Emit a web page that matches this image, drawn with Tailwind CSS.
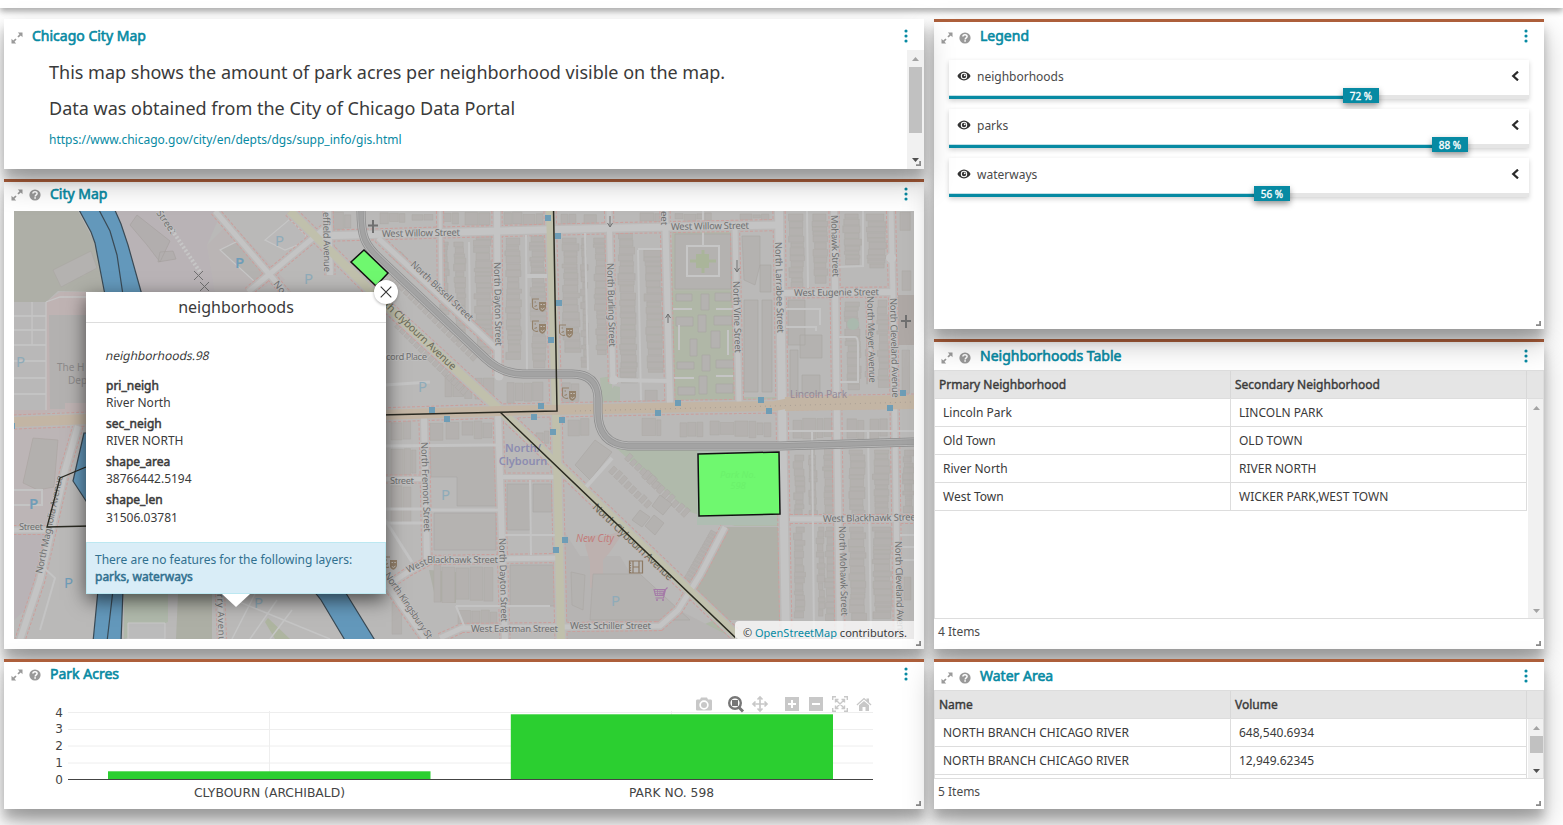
<!DOCTYPE html>
<html lang="en">
<head>
<meta charset="utf-8">
<title>Chicago dashboard</title>
<script src="https://cdn.jsdelivr.net/npm/@tailwindcss/browser@4"></script>
</head>
<body class="bg-white text-[#3a3a3a] text-[12px] font-['Noto_Sans',sans-serif] overflow-hidden w-[1563px] h-[825px]">
<svg width="0" height="0" class="absolute">
  <symbol id="expand" viewBox="0 0 12 12"><path d="M6.800 .5H11.500V5.200L9.800 3.500 7.600 5.600 6.400 4.400 8.500 2.200zM.5 6.800V11.500H5.200L3.500 9.800 5.600 7.600 4.400 6.400 2.200 8.500z" fill="#9a9a9a"/></symbol>
  <symbol id="help" viewBox="0 0 12 12"><circle cx="6" cy="6" r="5.600" fill="#999"/><path d="M3.900 4.600C3.900 2.200 8.100 2.200 8.100 4.600 8.100 5.900 6.200 5.900 6.200 7.400" fill="none" stroke="#fff" stroke-width="1.500"/><rect x="5.300" y="8.200" width="1.600" height="1.500" fill="#fff"/></symbol>
  <symbol id="dots" viewBox="0 0 4 14"><g fill="#078aa3"><circle cx="2" cy="2" r="1.550"/><circle cx="2" cy="7" r="1.550"/><circle cx="2" cy="12" r="1.550"/></g></symbol>
  <symbol id="grip" viewBox="0 0 5 5"><path d="M3.200 0H5V5H0V3.200H3.200z" fill="#8a8a8a"/></symbol>
  <symbol id="up" viewBox="0 0 7 4"><path d="M0 4 3.500 0 7 4z"/></symbol>
  <symbol id="down" viewBox="0 0 7 4"><path d="M0 0 3.500 4 7 0z"/></symbol>
  <symbol id="eye" viewBox="0 0 14 10"><path fill-rule="evenodd" d="M7 .5C10 .5 12.500 2.700 13.600 5 12.500 7.300 10 9.500 7 9.500S1.500 7.300 .4 5C1.500 2.700 4 .5 7 .5zM7 1.800A3.200 3.200 0 1 0 7 8.200A3.200 3.200 0 1 0 7 1.800z" fill="#333"/><circle cx="7" cy="5" r="2.200" fill="#333"/><circle cx="7.700" cy="4.300" r=".9" fill="#fff"/></symbol>
  <symbol id="chev" viewBox="0 0 8 10"><path d="M7 .6 2.200 5 7 9.400" fill="none" stroke="#2b2b2b" stroke-width="2.200"/></symbol>
</svg>

<header class="relative h-2 bg-white shadow-[0_3px_6px_rgba(0,0,0,0.16),0_3px_6px_rgba(0,0,0,0.23)]"></header>

<main class="flex gap-2.5 pl-1 pt-[11px]">
  <!-- left column -->
  <div class="flex flex-col gap-2.5 w-[920px]">
    <section class="relative z-40 h-[150px] bg-white flex flex-col shadow-[0_14px_28px_rgba(0,0,0,0.25),0_10px_10px_rgba(0,0,0,0.22)]">
      <div class="h-[31px] pt-[3px] flex items-center pl-[7px] pr-4">
        <svg class="w-3 h-3 mt-1 mr-[9px]"><use href="#expand"/></svg>
        <h2 class="text-[14px] text-[#078aa3] [-webkit-text-stroke:0.6px] grow -mt-0.5">Chicago City Map</h2>
        <svg class="w-1 h-[14px]"><use href="#dots"/></svg>
      </div>
      <div class="flex grow">
        <div class="grow pl-[45px]">
          <p class="text-[18px] leading-[26px] mt-[9px]">This map shows the amount of park acres per neighborhood visible on the map.</p>
          <p class="text-[18px] leading-[26px] mt-[10px]">Data was obtained from the City of Chicago Data Portal</p>
          <p class="text-[12px] leading-[18px] mt-[10px] text-[#078aa3]">https://www.chicago.gov/city/en/depts/dgs/supp_info/gis.html</p>
        </div>
        <div class="w-[17px] bg-[#f1f1f1] flex flex-col items-center pt-[7px]">
          <svg class="w-[7px] h-1 mb-[6px]" fill="#a3a3a3"><use href="#up"/></svg>
          <div class="w-[13px] h-[66px] bg-[#c1c1c1]"></div>
          <svg class="w-[7px] h-1 mt-[25px]" fill="#505050"><use href="#down"/></svg>
        </div>
      </div>
      <svg class="absolute right-[3px] bottom-[3px] w-[5px] h-[5px]"><use href="#grip"/></svg>
    </section>

    <section class="relative z-10 h-[470px] bg-white border-t-[3px] border-[#ad5f3b] shadow-[0_14px_28px_rgba(0,0,0,0.25),0_10px_10px_rgba(0,0,0,0.22)]">
      <div class="h-[25px] flex items-center pl-[7px] pr-4">
        <svg class="w-3 h-3 mt-px mr-[6px]"><use href="#expand"/></svg>
        <svg class="w-3 h-3 mt-px mr-[9px]"><use href="#help"/></svg>
        <h2 class="text-[14px] text-[#078aa3] [-webkit-text-stroke:0.6px] grow -mt-0.5">City Map</h2>
        <svg class="w-1 h-[14px] -mt-px"><use href="#dots"/></svg>
      </div>
      <div class="relative mt-1 ml-[10px] w-[900px] h-[428px] overflow-hidden">
        <svg id="map" class="block w-[900px] h-[428px] font-['Noto_Sans',sans-serif]" viewBox="14 211 900 428">
          <rect x="14" y="211" width="900" height="428" fill="#bab9b8"/>
          <path d="M14 211H78L95 243 105 292 58 291 46 302H14z" fill="#aeafa7"/>
          <path d="M53 270 91 251 97 268 61 287z" fill="#b4b2b0" stroke="#a9a6a3" stroke-width=".6"/>
          <path d="M115 211H222L207 245 215 292H141L122 225z" fill="#b9b3b6"/>
          <path d="M14 302H46L60 292H90V413L52 412 14 418z" fill="#bfb3b3"/>
          <path d="M14 302H46V410H14z" fill="#b9b8b8"/>
          <path d="M49 315H90V403H65V409H50z" fill="#b3b1b0"/>
          <g stroke="#c6c6c6" stroke-width="1.300" fill="none"><path d="M14 316H46M14 330H46M14 345H46M14 361H46M14 378H46M14 394H46M32 302V345M46 302V410M46 302 60 297H90"/></g>
          <path d="M14 427H80L48 527 14 529z" fill="#bcb5b6"/>
          <path d="M33 438 58 440 54 487 38 490 23 483z" fill="#b3b0ae" stroke="#a9a29f" stroke-width=".6"/>
          <path d="M14 530H50L36 600 14 620z" fill="#b9b3b6"/>
          <path d="M124 594H168V622L124 639z" fill="#afb8aa"/>
          <path d="M178 594H212V639H176z" fill="#adafa5"/>
          <path d="M268 618 290 639H275L265 622z" fill="#aeb5a0"/>
          <path d="M128 623H165V639H128z" fill="#bbb" stroke="#c8c8c8"/>
          <path d="M220 594 330 639M232 639 255 594M250 639 277 600M270 639 292 610" stroke="#c5c5c5" stroke-width="1.500"/>
          <path d="M614 446H698V524H783V518L783 526H735L690 512 640 470z" fill="#b0baab"/>
          <path d="M697 450H781V525H697z" fill="#afbdb2"/>
          <path d="M727 527H778L782 620H720L695 591z" fill="#afb0a8"/>
          <path d="M672 232H733V291H672z" fill="#b3b7ab"/>
          <path d="M672 291H735V400H672z" fill="#b0b7a7"/>
          <path d="M600 378 612 376V390L608 404H602z" fill="#b0baab"/>
          <path d="M743 397H778V404H743zM614 386 620 387V402H602z" fill="#b0b9ac"/>
          <path d="M898 295H914V345H898z" fill="#aea8a5"/>
          <path d="M702 625V639H735L715 620z" fill="#aeb7a6"/>
          <path d="M560 525 580 556 620 556 640 590 735 639H560z" fill="#b6b4b3"/>
          <path d="M585 545Q590 530 602 537L625 530 610 552 603 560V588H590V562z" fill="#bdb1af"/>
          <path d="M429 570 456 572V603L436 601z" fill="#aeafa7"/>
          <path d="M430 446H498V506H457V477H431z" fill="#b4b2b0" stroke="#aaa6a4" stroke-width=".6"/>
          <path d="M434 513H496V550H434z" fill="#b5b3b1" stroke="#aaa6a4" stroke-width=".6"/>
          <path d="M510 565H555V606H510z" fill="#b4b2b0" stroke="#aaa6a4" stroke-width=".6"/>
          <path d="M507 484H530V530H507zM533 484H552V512H533z" fill="#b4b2b0" stroke="#aaa6a4" stroke-width=".6"/>
          <path d="M230 222 285 280 250 292H215L207 245z" fill="#bab5b5"/>
          <path d="M240 240 270 270 255 282 220 250z" fill="#b4b2b0" stroke="#c6c6c6" stroke-width="1.200"/>
          <path d="M290 219 310 240 285 250 265 240z" fill="#bab9b9" stroke="#c6c6c6" stroke-width="1.200"/>
          <path d="M130 225 137 215 170 241 160 262 147 245z M160 252 173 251 176 259 158 262z" fill="#b2aeae" stroke="#a59f9e" stroke-width=".6"/>
          <g id="houses" fill="#b4b1af" stroke="#aca8a5" stroke-width=".5"></g>
          <g fill="#b4b2b0" stroke="#a9a6a3" stroke-width=".6">
            <path d="M675 234H731V289H675z"/>
            <path d="M676 294H692V301H676zM701 294H709V310H701zM715 293H731V301H715zM676 317H693V326H676zM698 315H706V332H698zM714 316H732V325H714zM690 339H697V356H690zM711 331H720V348H711zM677 362H694V369H677zM702 355H710V371H702zM716 360H734V368H716zM678 387H695V395H678zM699 376H707V394H699zM716 384H733V393H716z"/>
            <path d="M788 300H805V345H788zM800 335H822V358H800zM790 350H798V398H790zM802 375H820V394H802zM742 236H760V265L755 285 744 280zM760 265H771V292H760zM744 300H758V392H744zM762 300H772V392H762z"/>
            <path d="M640 510 650 517 642 527 632 520zM654 515 664 523 655 535 645 526zM595 440 612 452 590 480 575 465zM660 495 672 504 663 515 652 506z"/>
            <path d="M593 574H640L690 620H590zM571 572 585 575 583 610 572 605z"/>
          </g>
          <path d="M687 246H719V276H687z" fill="#b4b2b0" stroke="#c6c6c6" stroke-width="2"/>
          <path d="M696 254H709V268H696z" fill="#aab59a"/><path d="M690 261H716M703 250V273" stroke="#aab59a" stroke-width="3"/>
          <path d="M703 211V246M673 309H692M716 309H733M679 325V350M728 330V355M674 378H694M716 376H733" stroke="#c5c5c5" stroke-width="2" fill="none"/>
          <circle cx="853" cy="324" r="6" fill="#aab9ae"/>
          <g id="roads" fill="none"></g>
          <!-- elevated railway -->
          <g fill="none">
            <path d="M361 211C361 236 364 245 382 261L485 358Q502 374 523 374H572Q597 374 598 398V412Q598 444 628 446H780L914 442" stroke="#8c8c8c" stroke-width="9"/>
            <path d="M361 211C361 236 364 245 382 261L485 358Q502 374 523 374H572Q597 374 598 398V412Q598 444 628 446H780L914 442" stroke="#b6b6b6" stroke-width="7.600"/>
            <path d="M361 211C361 236 364 245 382 261L485 358Q502 374 523 374H572Q597 374 598 398V412Q598 444 628 446H780L914 442" stroke="#979797" stroke-width="5.400"/>
            <path d="M361 211C361 236 364 245 382 261L485 358Q502 374 523 374H572Q597 374 598 398V412Q598 444 628 446H780L914 442" stroke="#a3a3a3" stroke-width="4"/>
          </g>
          <!-- street labels -->
          <g fill="#707070" font-size="9.500" stroke="#c2c2c2" stroke-width="1.300" paint-order="stroke">
            <text x="382" y="237" textLength="78" transform="rotate(-1 382 237)">West Willow Street</text>
            <text x="671" y="230" textLength="78" transform="rotate(-1 671 230)">West Willow Street</text>
            <text x="794" y="296" textLength="85" transform="rotate(-.5 794 296)">West Eugenie Street</text>
            <text x="823" y="522" textLength="96" transform="rotate(-1 823 522)">West Blackhawk Street</text>
            <text x="427" y="563" textLength="71">Blackhawk Street</text>
            <text x="408" y="573" transform="rotate(-24 408 573)">West</text>
            <text x="471" y="632" textLength="87">West Eastman Street</text>
            <text x="570" y="629" textLength="81">West Schiller Street</text>
            <text x="386" y="360" textLength="41">cord Place</text>
            <text x="390" y="484" textLength="24">Street</text>
            <text x="19" y="530" textLength="24">Street</text>
            <text x="323" y="212" textLength="60" transform="rotate(89 323 212)">effield Avenue</text>
            <text x="494" y="262" textLength="84" transform="rotate(89 494 262)">North Dayton Street</text>
            <text x="607" y="263" textLength="84" transform="rotate(88.500 607 263)">North Burling Street</text>
            <text x="661" y="211" transform="rotate(90 661 211)">eet</text>
            <text x="733" y="281" textLength="72" transform="rotate(88.500 733 281)">North Vine Street</text>
            <text x="775" y="242" textLength="91" transform="rotate(88.500 775 242)">North Larrabee Street</text>
            <text x="831" y="215" textLength="62" transform="rotate(88.500 831 215)">Mohawk Street</text>
            <text x="867" y="296" textLength="87" transform="rotate(88.500 867 296)">North Meyer Avenue</text>
            <text x="890" y="298" textLength="100" transform="rotate(88.700 890 298)">North Cleveland Avenue</text>
            <text x="839" y="526" textLength="90" transform="rotate(88.500 839 526)">North Mohawk Street</text>
            <text x="895" y="541" textLength="100" transform="rotate(88.500 895 541)">North Cleveland Avenue</text>
            <text x="421" y="442" textLength="90" transform="rotate(88 421 442)">North Fremont Street</text>
            <text x="499" y="538" textLength="84" transform="rotate(88.500 499 538)">North Dayton Street</text>
            <text x="410" y="265" textLength="82" transform="rotate(43.500 410 265)">North Bissell Street</text>
            <text x="384" y="306" textLength="94" font-size="10.500" fill="#6b6a58" stroke="none" transform="rotate(43.500 384 306)">th Clybourn Avenue</text>
            <text x="592" y="508" textLength="106" font-size="10.500" fill="#6b6a58" stroke="none" transform="rotate(43.500 592 508)">North Clybourn Avenue</text>
            <text x="384" y="575" textLength="78" transform="rotate(56 384 575)">North Kingsbury St</text>
            <text x="156" y="213" transform="rotate(55 156 213)">Street</text>
            <text x="273" y="284" transform="rotate(52 273 284)">Nor</text>
            <text x="42" y="574" textLength="100" transform="rotate(-78 42 574)">North Magnolia Avenue</text>
            <text x="217" y="594" textLength="54" transform="rotate(88 217 594)">rry Avenue</text>
          </g>
          <g fill="#8d8b8b" font-size="10"><text x="57" y="371">The H</text><text x="68" y="384">Dep</text></g>
          <text x="790" y="398" font-size="10" fill="#948a98" textLength="57">Lincoln Park</text>
          <g fill="#8c8cb0" font-size="11" font-weight="600" text-anchor="middle"><text x="523" y="452">North/</text><text x="523" y="465">Clybourn</text></g>
          <text x="576" y="542" font-size="10" font-style="italic" fill="#c27e7c" textLength="38">New City</text>
          <g fill="#6f9db8" font-size="15"><text x="235" y="268" font-weight="600">P</text><g fill="#8fabb9"><text x="275" y="246">P</text><text x="304" y="284">P</text><text x="16" y="367">P</text><text x="418" y="392">P</text><text x="441" y="500">P</text><text x="611" y="606">P</text><text x="254" y="608">P</text></g><text x="29" y="509" font-weight="600">P</text><text x="64" y="588">P</text></g>
          <!-- crosses, gates, arrows -->
          <g stroke="#707070" fill="none"><path d="M373 220V233M368 225.500H378M906 315V328M901 321H911" stroke-width="2"/><path d="M194 271 203 280M203 271 194 280M200 282 209 291M209 282 200 291" stroke-width="1"/><path d="M610 216V226M607.500 223 610 227 612.500 223M737 260V271M734.500 268 737 272 739.500 268M668 314V323M665.500 318 668 314 670.500 318"/></g>
          <path d="M172 230 200 272" stroke="#c6c6c6" stroke-width="4" stroke-dasharray="2 2"/>
          <g id="stops" fill="#6e9db6"></g>
          <!-- theatre masks, cinema, shop -->
          <g id="masks"></g>
          <g fill="none" stroke="#8d7a64" stroke-width="1.200"><path d="M629.500 561V573H642.500V561zM633 561V573M639 561V573M633 567H639"/><path d="M630.500 562.500V573" stroke-dasharray="1.200 1.200"/></g>
          <g fill="none" stroke="#a57aa8"><path d="M654 589.500H664.500L663 595.500H655.500zM667.500 587.500 665.500 589.500 663.500 598H655.500" stroke-width="1.100"/><path d="M655 591.500H664M655 593.500H663.500M657.500 589.500V595M660 589.500V595M662 589.500V595" stroke-width=".7"/></g><circle cx="657" cy="600" r="1" fill="#a57aa8"/><circle cx="663" cy="600" r="1" fill="#a57aa8"/>
          <!-- waterways layer -->
          <g fill="#6398bb" stroke="#3a4a55" stroke-width="1.200"><path d="M78 208 91 232 95 243 105 295H142L128 245 121 224 114 208zM84 433 73 481 88 504V433zM98 590 93 642H121L123 590zM313 590 321 600 346 642H376L344 590z"/><path d="M98 208 110 231 117 255 123 295M113 590 107 642" fill="none"/></g>
          <!-- neighborhoods layer -->
          <g fill="none" stroke="#2a2a22"><path d="M86 467 60 478 47 527 90 526" stroke-width="1.300"/><path d="M553.500 208 557 411 380 415M500 412 740 642" stroke-width="1.500"/></g>
          <!-- parks layer -->
          <g fill="#6ff86f" stroke="#111" stroke-width="1.500"><path d="M364 250 388 273 376 286 351 262zM698 454 779 452 780 514 699 516z"/></g>
          <g fill="#6bf16b" font-size="9.500" font-style="italic" text-anchor="middle"><text x="738" y="478">Park No.</text><text x="738" y="489">598</text></g>
        </svg>

        <!-- feature popup -->
        <div class="absolute left-[72px] top-[81px] w-[300px] h-[302px] bg-white shadow-[0_6px_18px_rgba(0,0,0,0.6)] flex flex-col">
          <div class="h-[31px] border-b border-[#ddd] text-center text-[16px] leading-[30px]">neighborhoods</div>
          <div class="pl-[20px] grow leading-[17px]">
            <p class="mt-[24px] mb-[13px]"><span class="inline-block -skew-x-12">neighborhoods.98</span></p>
            <p class="[-webkit-text-stroke:0.5px]">pri_neigh</p><p class="mb-1">River North</p>
            <p class="[-webkit-text-stroke:0.5px]">sec_neigh</p><p class="mb-1">RIVER NORTH</p>
            <p class="[-webkit-text-stroke:0.5px]">shape_area</p><p class="mb-1">38766442.5194</p>
            <p class="[-webkit-text-stroke:0.5px]">shape_len</p><p class="mt-px">31506.03781</p>
          </div>
          <div class="h-[52px] bg-[#d9edf7] border border-[#bce8f1] text-[#31708f] leading-[17px] pl-2 pt-2">
            <p>There are no features for the following layers:</p><p class="[-webkit-text-stroke:0.5px]">parks, waterways</p>
          </div>
          <svg class="absolute left-[136px] top-[302px] w-[28px] h-[13px]" viewBox="0 0 28 13"><path d="M0 0H28L14 13z" fill="#fff"/></svg>
          <div class="absolute -right-3 -top-3 w-6 h-6 rounded-full bg-white shadow-[0_1px_3px_rgba(0,0,0,0.3)] flex items-center justify-center">
            <svg class="w-3 h-3" viewBox="0 0 12 12"><path d="M.7 .7 11.300 11.300M11.300 .7 .7 11.300" stroke="#333" stroke-width="1.100"/></svg>
          </div>
        </div>
        <div class="absolute right-0 bottom-0 h-[18px] w-[179px] bg-white/75 rounded-tl-[4px] pl-[8px] leading-[23px] text-[11px] whitespace-nowrap">© <span class="text-[#078aa3]">OpenStreetMap</span> contributors.</div>
      </div>
      <svg class="absolute right-[3px] bottom-[3px] w-[5px] h-[5px]"><use href="#grip"/></svg>
    </section>

    <section class="relative z-50 h-[150px] bg-white border-t-[3px] border-[#ad5f3b] shadow-[0_14px_28px_rgba(0,0,0,0.25),0_10px_10px_rgba(0,0,0,0.22)]">
      <div class="h-[25px] flex items-center pl-[7px] pr-4">
        <svg class="w-3 h-3 mt-px mr-[6px]"><use href="#expand"/></svg>
        <svg class="w-3 h-3 mt-px mr-[9px]"><use href="#help"/></svg>
        <h2 class="text-[14px] text-[#078aa3] [-webkit-text-stroke:0.6px] grow -mt-0.5">Park Acres</h2>
        <svg class="w-1 h-[14px] -mt-px"><use href="#dots"/></svg>
      </div>
      <svg class="block w-[920px] h-[120px] font-['DejaVu_Sans',sans-serif]" viewBox="4 687 920 120">
        <path d="M68 712.500H873M68 729.500H873M68 746H873M68 763H873M269.500 711V779M671.500 711V779" stroke="#eee" fill="none"/>
        <rect x="108" y="771.300" width="322.500" height="8" fill="#2bcf30"/><rect x="510.800" y="714.300" width="322.200" height="65" fill="#2bcf30"/>
        <path d="M68 779.500H873" stroke="#444"/>
        <g font-size="12" fill="#444"><g text-anchor="end"><text x="63" y="717">4</text><text x="63" y="733">3</text><text x="63" y="750">2</text><text x="63" y="767">1</text><text x="63" y="784">0</text></g>
        <g text-anchor="middle"><text x="269.500" y="797" textLength="151" lengthAdjust="spacingAndGlyphs">CLYBOURN (ARCHIBALD)</text><text x="671.500" y="797" textLength="85" lengthAdjust="spacingAndGlyphs">PARK NO. 598</text></g></g>
        <g fill="#c8c8c8">
          <path fill-rule="evenodd" d="M697 699.500H700L701 697.500H707L708 699.500H711Q712 699.500 712 701V709.500Q712 710.500 711 710.500H697Q696 710.500 696 709.500V701Q696 699.500 697 699.500zM704 700.300A4.700 4.700 0 1 0 704 709.700A4.700 4.700 0 1 0 704 700.300z"/><circle cx="704" cy="705" r="3"/>
          <path d="M785 697H799V711H785zM809 697H823V711H809z"/>
          <path d="M856.500 704.500 864 697.700 866.500 700V698.500H869V702.200L871.500 704.500 870.700 705.500 864 699.500 857.300 705.500zM859 705.300 864 701 869 705.300V711H865.500V707H862.500V711H859z"/>
        </g>
        <path d="M788 704H796M792 700V708M812 704H820" stroke="#fff" stroke-width="2"/>
        <g fill="none" stroke="#777"><circle cx="735" cy="703" r="5.800" stroke-width="2.400"/><path d="M739 707.500 743 711.500" stroke-width="3"/><rect x="732.500" y="700.500" width="5" height="5" fill="#777" stroke-width="1"/></g>
        <path d="M753 704H767M760 697V711M755.500 701.500 753 704 755.500 706.500M764.500 701.500 767 704 764.500 706.500M757.500 699.500 760 697 762.500 699.500M757.500 708.500 760 711 762.500 708.500" fill="none" stroke="#c8c8c8" stroke-width="1.700"/>
        <path d="M832.700 700V696.700H836M844 696.700H847.300V700M847.300 708V711.300H844M836 711.300H832.700V708M835.500 699.500 844.500 708.500M844.500 699.500 835.500 708.500M835.500 702.500V699.500H838.500M841.500 699.500H844.500V702.500M844.500 705.500V708.500H841.500M838.500 708.500H835.500V705.500" fill="none" stroke="#c8c8c8" stroke-width="1.400"/>
      </svg>
      <svg class="absolute right-[3px] bottom-[3px] w-[5px] h-[5px]"><use href="#grip"/></svg>
    </section>
  </div>

  <!-- right column -->
  <div class="flex flex-col gap-2.5 w-[610px]">
    <section class="relative z-30 h-[310px] bg-white border-t-[3px] border-[#ad5f3b] shadow-[0_14px_28px_rgba(0,0,0,0.25),0_10px_10px_rgba(0,0,0,0.22)]">
      <div class="h-[28px] flex items-center pl-[7px] pr-4">
        <svg class="w-3 h-3 mt-1 mr-[6px]"><use href="#expand"/></svg>
        <svg class="w-3 h-3 mt-1 mr-[9px]"><use href="#help"/></svg>
        <h2 class="text-[14px] text-[#078aa3] [-webkit-text-stroke:0.6px] grow -mt-0.5">Legend</h2>
        <svg class="w-1 h-[14px]"><use href="#dots"/></svg>
      </div>
      <div class="mt-[10px] ml-[15px] w-[580px] flex flex-col gap-2.5">
        <div class="relative h-[39px] bg-white shadow-[0_2px_5px_rgba(0,0,0,0.18)] flex flex-col">
          <div class="h-[35px] flex items-center pl-2 pr-[10px] pb-0.5"><svg class="w-[14px] h-[10px] mr-[6px] -mt-0.5"><use href="#eye"/></svg><span class="grow text-[#4a4a4a]">neighborhoods</span><svg class="w-2 h-[10px] -mt-px"><use href="#chev"/></svg></div>
          <div class="h-1 bg-[#e5e5e5]"><div class="h-1 bg-[#078aa3] border-t border-[#c3e0e6]" style="width:394px"></div></div>
          <div class="absolute top-[28px] w-9 h-[15px] bg-[#078aa3] text-white text-[10px] leading-[16px] text-center [-webkit-text-stroke:0.3px] shadow-[0_3px_6px_rgba(0,0,0,0.4)]" style="left:394px">72 %</div>
        </div>
        <div class="relative h-[39px] bg-white shadow-[0_2px_5px_rgba(0,0,0,0.18)] flex flex-col">
          <div class="h-[35px] flex items-center pl-2 pr-[10px] pb-0.5"><svg class="w-[14px] h-[10px] mr-[6px] -mt-0.5"><use href="#eye"/></svg><span class="grow text-[#4a4a4a]">parks</span><svg class="w-2 h-[10px] -mt-px"><use href="#chev"/></svg></div>
          <div class="h-1 bg-[#e5e5e5]"><div class="h-1 bg-[#078aa3] border-t border-[#c3e0e6]" style="width:483px"></div></div>
          <div class="absolute top-[28px] w-9 h-[15px] bg-[#078aa3] text-white text-[10px] leading-[16px] text-center [-webkit-text-stroke:0.3px] shadow-[0_3px_6px_rgba(0,0,0,0.4)]" style="left:483px">88 %</div>
        </div>
        <div class="relative h-[39px] bg-white shadow-[0_2px_5px_rgba(0,0,0,0.18)] flex flex-col">
          <div class="h-[35px] flex items-center pl-2 pr-[10px] pb-0.5"><svg class="w-[14px] h-[10px] mr-[6px] -mt-0.5"><use href="#eye"/></svg><span class="grow text-[#4a4a4a]">waterways</span><svg class="w-2 h-[10px] -mt-px"><use href="#chev"/></svg></div>
          <div class="h-1 bg-[#e5e5e5]"><div class="h-1 bg-[#078aa3] border-t border-[#c3e0e6]" style="width:305px"></div></div>
          <div class="absolute top-[28px] w-9 h-[15px] bg-[#078aa3] text-white text-[10px] leading-[16px] text-center [-webkit-text-stroke:0.3px] shadow-[0_3px_6px_rgba(0,0,0,0.4)]" style="left:305px">56 %</div>
        </div>
      </div>
      <svg class="absolute right-[3px] bottom-[3px] w-[5px] h-[5px]"><use href="#grip"/></svg>
    </section>

    <section class="relative z-20 h-[310px] bg-white border-t-[3px] border-[#ad5f3b] shadow-[0_14px_28px_rgba(0,0,0,0.25),0_10px_10px_rgba(0,0,0,0.22)]">
      <div class="h-[28px] flex items-center pl-[7px] pr-4">
        <svg class="w-3 h-3 mt-1 mr-[6px]"><use href="#expand"/></svg>
        <svg class="w-3 h-3 mt-1 mr-[9px]"><use href="#help"/></svg>
        <h2 class="text-[14px] text-[#078aa3] [-webkit-text-stroke:0.6px] grow -mt-0.5">Neighborhoods Table</h2>
        <svg class="w-1 h-[14px]"><use href="#dots"/></svg>
      </div>
      <div class="h-[249px] border border-[#ddd] flex flex-col">
        <div class="flex h-[28px] bg-[#e5e5e5] border-b border-[#ddd] leading-[27px] [-webkit-text-stroke:0.4px]">
          <div class="w-[296px] pl-1 border-r border-[#d8d8d8]">Prmary Neighborhood</div><div class="w-[296px] pl-1 border-r border-[#d8d8d8]">Secondary Neighborhood</div>
        </div>
        <div class="flex grow">
          <div class="w-[592px] leading-[27px]">
            <div class="flex h-[28px] border-b border-[#ddd]"><div class="w-[296px] pl-2 border-r border-[#ddd]">Lincoln Park</div><div class="w-[296px] pl-2 border-r border-[#ddd]">LINCOLN PARK</div></div>
            <div class="flex h-[28px] border-b border-[#ddd]"><div class="w-[296px] pl-2 border-r border-[#ddd]">Old Town</div><div class="w-[296px] pl-2 border-r border-[#ddd]">OLD TOWN</div></div>
            <div class="flex h-[28px] border-b border-[#ddd]"><div class="w-[296px] pl-2 border-r border-[#ddd]">River North</div><div class="w-[296px] pl-2 border-r border-[#ddd]">RIVER NORTH</div></div>
            <div class="flex h-[28px] border-b border-[#ddd]"><div class="w-[296px] pl-2 border-r border-[#ddd]">West Town</div><div class="w-[296px] pl-2 border-r border-[#ddd]">WICKER PARK,WEST TOWN</div></div>
          </div>
          <div class="grow ml-px pl-0.5 bg-[#f1f1f1] flex flex-col justify-between items-center pt-[7px] pb-[5px]"><svg class="w-[7px] h-1" fill="#a3a3a3"><use href="#up"/></svg><svg class="w-[7px] h-1" fill="#a3a3a3"><use href="#down"/></svg></div>
        </div>
      </div>
      <div class="pl-1 pt-[4px] leading-[18px] text-[#4a4a4a]">4 Items</div>
      <svg class="absolute right-[3px] bottom-[3px] w-[5px] h-[5px]"><use href="#grip"/></svg>
    </section>

    <section class="relative z-60 h-[150px] bg-white border-t-[3px] border-[#ad5f3b] shadow-[0_14px_28px_rgba(0,0,0,0.25),0_10px_10px_rgba(0,0,0,0.22)]">
      <div class="h-[28px] flex items-center pl-[7px] pr-4">
        <svg class="w-3 h-3 mt-1 mr-[6px]"><use href="#expand"/></svg>
        <svg class="w-3 h-3 mt-1 mr-[9px]"><use href="#help"/></svg>
        <h2 class="text-[14px] text-[#078aa3] [-webkit-text-stroke:0.6px] grow -mt-0.5">Water Area</h2>
        <svg class="w-1 h-[14px]"><use href="#dots"/></svg>
      </div>
      <div class="h-[89px] border border-[#ddd] flex flex-col">
        <div class="flex h-[28px] bg-[#e5e5e5] border-b border-[#ddd] leading-[27px] [-webkit-text-stroke:0.4px]">
          <div class="w-[296px] pl-1 border-r border-[#d8d8d8]">Name</div><div class="w-[296px] pl-1 border-r border-[#d8d8d8]">Volume</div>
        </div>
        <div class="flex grow">
          <div class="w-[592px] leading-[27px]">
            <div class="flex h-[28px] border-b border-[#ddd]"><div class="w-[296px] pl-2 border-r border-[#ddd]">NORTH BRANCH CHICAGO RIVER</div><div class="w-[296px] pl-2 border-r border-[#ddd]">648,540.6934</div></div>
            <div class="flex h-[28px] border-b border-[#ddd]"><div class="w-[296px] pl-2 border-r border-[#ddd]">NORTH BRANCH CHICAGO RIVER</div><div class="w-[296px] pl-2 border-r border-[#ddd]">12,949.62345</div></div>
            <div class="flex h-[3px]"><div class="w-[296px] border-r border-[#ddd]"></div><div class="w-[296px] border-r border-[#ddd]"></div></div>
          </div>
          <div class="grow ml-px pl-0.5 bg-[#f1f1f1] flex flex-col items-center pt-[7px]"><svg class="w-[7px] h-1 mb-[6px]" fill="#a3a3a3"><use href="#up"/></svg><div class="w-[13px] h-[17px] bg-[#c1c1c1]"></div><svg class="w-[7px] h-1 mt-4" fill="#505050"><use href="#down"/></svg></div>
        </div>
      </div>
      <div class="pl-1 pt-[4px] leading-[18px] text-[#4a4a4a]">5 Items</div>
      <svg class="absolute right-[3px] bottom-[3px] w-[5px] h-[5px]"><use href="#grip"/></svg>
    </section>
  </div>
</main>

<script>
  // Small repeatable generator so the house rows always look the same.
  let seed = 7;
  const rnd = () => (seed = (seed * 16807) % 2147483647) / 2147483647;
  // House rows: x, y, width, height, skew of the column towards the right.
  const rows = [
    [438,242,11,75,1],[453,242,13,100,2],[473,236,19,120,2],[504,238,17,125,2],[529,236,17,130,2],
    [561,238,18,118,2],[580,238,8,130,1],[593,238,14,120,2],[617,233,18,150,3],[643,250,19,125,3],[640,212,22,12,0],
    [504,212,40,14,0],[380,212,26,12,0],[412,212,22,12,0],[440,212,22,12,0],[465,212,26,14,0],[561,212,16,15,0],[584,212,18,15,0],[330,212,26,18,0],[675,212,40,10,0],[740,212,30,10,0],
    [788,214,16,72,1],[812,214,16,72,1],[842,214,19,50,1],[866,214,20,55,1],[900,212,14,20,0],[902,270,10,22,0],
    [844,302,16,85,2],[864,330,5,55,1],[876,300,13,88,2],[902,350,10,45,1],
    [793,455,12,60,0],[808,448,9,70,1],[822,448,13,70,1],[848,450,17,64,1],[872,450,18,64,1],[902,450,12,64,1],
    [793,527,12,90,1],[816,527,9,92,1],[824,527,12,92,1],[848,527,18,90,1],[872,527,20,92,1],[904,575,8,25,0],
    [793,418,40,22,0],[847,418,18,22,0],[870,418,20,22,0],[642,418,20,20,0],[680,420,24,20,0],[710,420,62,18,0],
    [391,421,24,22,0],[430,421,14,20,0],[446,421,14,20,0],[462,421,32,18,0],[568,418,22,18,0],[391,448,26,28,0],[391,485,22,38,0],
    [445,375,28,24,0],[475,376,20,25,0],[507,382,38,22,0],[562,382,18,22,0],[645,388,18,14,0],[434,565,60,38,0],[458,610,40,15,0],[392,600,14,35,0],
    [536,430,14,14,0]
  ];
  let out = '';
  for (const [x, y, w, h, s] of rows) {
    if (h < 50) {
      for (let a = x; a < x + w - 5;) { const d = Math.min(7 + rnd() * 8, x + w - a); out += `<path d="M${a.toFixed(1)} ${(y + rnd() * 3).toFixed(1)}h${(d - 1.2).toFixed(1)}V${(y + h - rnd() * 4).toFixed(1)}h${(1.2 - d).toFixed(1)}z"/>`; a += d; }
    } else {
      for (let b = y; b < y + h - 3;) { const d = 4 + rnd() * 4, o = s * (b - y) / h, l = rnd() * 3; out += `<path d="M${(x + o + l).toFixed(1)} ${b.toFixed(1)}h${(w - l - rnd() * 3).toFixed(1)}v${(d - .8).toFixed(1)}H${(x + o + l).toFixed(1)}z"/>`; b += d; }
    }
  }
  // Diagonal rows along Clybourn, Bissell and the townhouses by the park.
  const diag = [[392,258,92,84,11],[378,268,100,98,11],[398,330,70,70,12],[330,258,24,22,10],[628,462,34,32,9],[612,475,40,38,9],[645,480,44,42,10]];
  for (const [x, y, dx, dy, w] of diag) {
    const n = Math.floor(dx / 4.6);
    for (let i = 0; i < n; i++) out += `<rect x="${(x + dx * i / n).toFixed(1)}" y="${(y + dy * i / n).toFixed(1)}" width="4.6" height="${(w - rnd() * 3).toFixed(1)}" transform="rotate(-138 ${(x + dx * i / n).toFixed(1)} ${(y + dy * i / n).toFixed(1)})"/>`;
  }
  for (let i = 0; i < 15; i++) out += `<rect x="${(711 - i * 1.9).toFixed(1)}" y="${(530 + i * 3.4).toFixed(1)}" width="11" height="3" transform="rotate(28 ${711 - i * 1.9} ${530 + i * 3.4})"/>`;
  document.getElementById('houses').innerHTML = out;

  // Roads: path, width, colour, sidewalk on both sides.
  const G = '#c4c4c4', Y = '#c0c0ac', T = '#c3b5a4';
  const roads = [
    ['M318 236 460 232 620 228 782 225', 7, G, 1], ['M328 211 330 275', 6, G, 1], ['M378 238 498 350', 5, G, 1],
    ['M440 211 441 300', 3, G, 1], ['M469 242 470 322', 2, G, 0], ['M497 211 498 376', 6, G, 1], ['M526 235 527 372', 2, G, 0], ['M527 276 547 276', 4, G, 0],
    ['M585 233 588 370', 2, G, 0], ['M609 211 613 384', 5, G, 1], ['M638 250 641 400M638 249H662', 2, G, 0], ['M665 211 670 404', 6, G, 1],
    ['M612 380 670 381', 4, G, 0], ['M735 228 739 402', 5, G, 1], ['M779 211 783 470 786 639', 8, G, 1],
    ['M807 211 808 288', 2, G, 0], ['M834 211 840 639', 6, G, 1], ['M863 211 863 266 838 267', 2, G, 0], ['M891 211 892 258 893 296 898 639', 5, G, 1],
    ['M783 293 893 292', 6, G, 1], ['M869 296 871 382', 2, G, 1], ['M839 337H855Q858 337 858 345V382H840M786 327H816V331M786 309H820V325', 2, G, 0],
    ['M498 412 505 639', 6, G, 1], ['M424 418 427 560', 6, G, 1], ['M380 446 500 445', 3, G, 0], ['M430 510 500 510M380 509H425M380 523H425', 3, G, 0], ['M380 479H423', 4, G, 1],
    ['M503 477 555 477', 4, G, 1], ['M530 480 531 555M505 535H555', 2, G, 0], ['M384 588 408 572 430 560 558 558', 5, G, 1], ['M380 512 412 562', 3, G, 0],
    ['M380 575 425 639', 5, G, 1], ['M440 638 462 628 660 626 678 610 700 575 725 527', 5, G, 1], ['M456 606 465 628M456 606H550', 2, G, 0], ['M586 487 612 458', 4, G, 0],
    ['M790 519 914 519', 5, G, 1], ['M788 431H914', 2, G, 0], ['M812 430 814 639M868 430 871 639', 2, G, 0], ['M900 535H914M900 547H914M900 560H914', 2, G, 0],
    ['M215 211 300 310', 5, G, 1], ['M248 292 325 228', 5, G, 1], ['M78 426 65 470 40 580 20 640', 6, G, 1], ['M50 530H14', 5, G, 1], ['M220 594 222 639', 5, G, 1],
    ['M385 385 430 382M386 355 425 358', 3, G, 0], ['M44 568 55 578 40 630', 2, G, 0], ['M14 505H42V490H14', 2, G, 0],
    ['M290 211 380 300 500 410 740 639', 8, Y, 1], ['M550 211 556 411 561 639', 8, Y, 1],
    ['M14 422 90 419 380 415 500 411 700 407 775 406 790 403 914 401', 10, T, 1], ['M785 404 914 402', 14, T, 0]
  ];
  let walks = '', beds = '', tops = '';
  for (const [d, w, c, s] of roads) {
    if (s) { walks += `<path d="${d}" stroke="#ca9f9c" stroke-width="${w + 5.2}" stroke-dasharray="3 1.800"/>`; beds += `<path d="${d}" stroke="#bbb9b8" stroke-width="${w + 3.2}"/>`; }
    tops += `<path d="${d}" stroke="${c}" stroke-width="${w}"/>`;
  }
  tops += '<circle cx="891" cy="258" r="5" fill="#c4c4c4"/><circle cx="499" cy="376" r="4.500" fill="#c4c4c4"/><circle cx="614" cy="380" r="4.500" fill="#c4c4c4"/>';
  tops += '<path d="M575 411 700 408 914 402" stroke="#a99f95" stroke-width="1" stroke-dasharray="1 4"/>';
  document.getElementById('roads').innerHTML = walks + beds + tops;

  const stops = [[548,218],[558,236],[559,303],[551,340],[432,410],[447,419],[541,406],[534,417],[562,420],[553,432],[678,403],[658,413],[761,400],[769,411],[903,393],[890,408],[565,540],[556,550],[12,426]];
  document.getElementById('stops').innerHTML = stops.map(([x, y]) => `<rect x="${x - 3}" y="${y - 3}" width="6" height="6"/>`).join('');
  const masks = [[539,305],[539,327],[566,331],[569,394],[390,563]];
  document.getElementById('masks').innerHTML = masks.map(([x, y]) => `<g transform="translate(${x} ${y})"><path d="M0 -6H-6.500V2Q-4 5.500 -1 4M-4.500 -3H-3M-4.500 1.500 -2 .5" fill="none" stroke="#94826c" stroke-width="1.100"/><path d="M0 -3H7V3Q3.500 10 0 4z" fill="#94826c"/><path d="M1.500 -.5H3M4.300 -.5H5.800M1.800 3.500Q3.500 5.500 5.500 3" stroke="#c4bfb8" stroke-width="1" fill="none"/></g>`).join('');
</script>
</body>
</html>
